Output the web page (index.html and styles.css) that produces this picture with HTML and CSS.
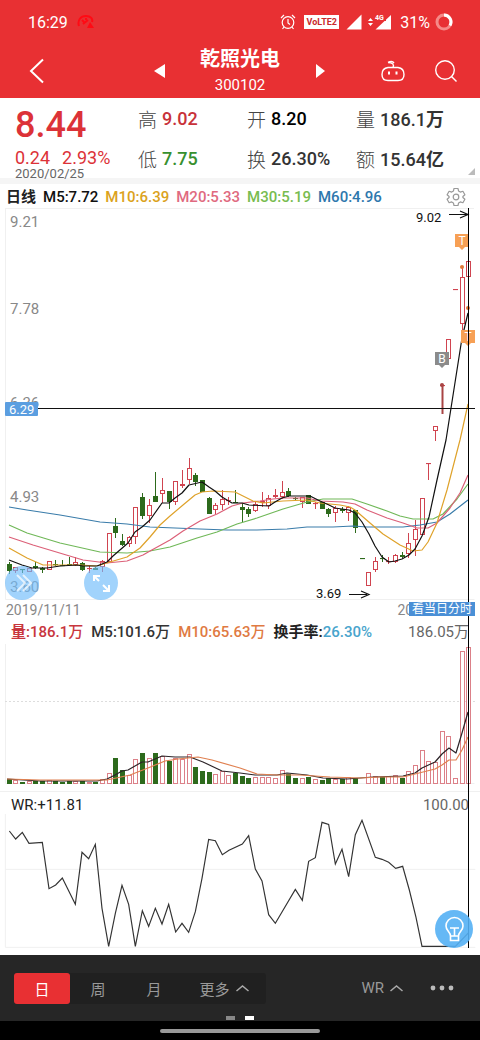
FILE: index.html
```html
<!DOCTYPE html>
<html lang="zh-CN">
<head>
<meta charset="utf-8">
<meta name="viewport" content="width=device-width, initial-scale=1">
<title>乾照光电 300102</title>
<link rel="stylesheet" href="styles.css">
</head>
<body>
<header class="header">
  <div class="status">
    <span class="clock">16:29</span>
    <svg class="status-app" width="18" height="14" viewBox="0 0 18 14" fill="none" stroke="#ff0a14" stroke-width="2"><path d="M2 11C0 5 4 1 9 1s7 3 6 6M5 5l2 2M9 3v2M6 9l5-4"/><path d="M13 7l4 6H10z" fill="#ff0a14" stroke="none"/></svg>
    <span class="spacer"></span>
    <svg width="16" height="16" viewBox="0 0 16 16" fill="none" stroke="#fff" stroke-width="1.2"><circle cx="8" cy="8.500" r="5.800"/><path d="M8 5v4l2 1.500M1 4l3-3M15 4l-3-3M4 13l-1.500 2M12 13l1.500 2"/></svg>
    <span class="volte">VoLTE2</span>
    <svg width="16" height="16" viewBox="0 0 16 16" fill="#fff"><path d="M15.500 .5v15H.5z"/></svg>
    <svg class="signal" width="25" height="16" viewBox="0 0 25 16"><path d="M24 1v14.500H8.500z" fill="#fff"/><path d="M3.500 4l2.500 3H1zM3.500 12l2.500-3H1z" fill="#fff"/><rect x="7" y="0" width="12" height="7" fill="#e83033"/><text class="net" x="8" y="6">4G</text></svg>
    <span class="battery">31%</span>
    <svg width="18" height="18" viewBox="0 0 18 18" fill="none" stroke-width="3"><circle cx="9" cy="9" r="7" stroke="#f58a88"/><path d="M9 2a7 7 0 0 1 6 10.500" stroke="#fff"/></svg>
  </div>
  <div class="titlebar">
    <button class="icon-btn back" aria-label="返回"><svg width="16" height="26" viewBox="0 0 16 26" fill="none" stroke="#fff" stroke-width="2"><path d="M14 1.500L2 13l12 11.500"/></svg></button>
    <div class="stock">
      <button class="icon-btn" aria-label="上一只"><svg width="11" height="14" viewBox="0 0 11 14" fill="#fff"><path d="M11 0v14L0 7z"/></svg></button>
      <div class="name"><h1>乾照光电</h1><span>300102</span></div>
      <button class="icon-btn" aria-label="下一只"><svg width="11" height="14" viewBox="0 0 11 14" fill="#fff"><path d="M1 0v14l9-7z"/></svg></button>
    </div>
    <div class="actions">
      <button class="icon-btn" aria-label="助手"><svg width="26" height="24" viewBox="0 0 26 24" fill="none" stroke="#fff" stroke-width="1.400"><path d="M8 8.500h10c4 .5 6 3.500 6 7 0 4-2 6-6 6H8c-4 0-6-2-6-6 0-3.500 2-6.500 6-7zM13 8.500c1.500-3-.5-5-5-5M8 3.500c3-1.500 5-1 6 .5"/><path d="M9 12.500v3M16.500 12.500v3" stroke-width="2"/></svg></button>
      <button class="icon-btn" aria-label="搜索"><svg width="24" height="24" viewBox="0 0 24 24" fill="none" stroke="#fff" stroke-width="1.400"><circle cx="11" cy="11" r="9.300"/><path d="M17.500 17.500l5 5"/></svg></button>
    </div>
  </div>
</header>

<section class="quote">
  <div class="price">
    <strong>8.44</strong>
    <p class="change"><span>0.24</span><span>2.93%</span></p>
    <time>2020/02/25</time>
  </div>
  <dl class="stats">
    <div><dt>高</dt><dd class="up">9.02</dd></div>
    <div><dt>开</dt><dd class="flat">8.20</dd></div>
    <div><dt>量</dt><dd>186.1<b>万</b></dd></div>
    <div><dt>低</dt><dd class="down">7.75</dd></div>
    <div><dt>换</dt><dd>26.30%</dd></div>
    <div><dt>额</dt><dd>15.64<b>亿</b></dd></div>
  </dl>
  <svg class="corner" width="7" height="7" viewBox="0 0 7 7"><path d="M7 0v7H0z" fill="#bbb"/></svg>
</section>

<main class="charts">
  <div class="legend ma-legend">
    <b class="period">日线</b><span class="m5">M5:7.72</span><span class="m10">M10:6.39</span><span class="m20">M20:5.33</span><span class="m30">M30:5.19</span><span class="m60">M60:4.96</span>
    <button class="icon-btn gear" aria-label="设置"><svg width="20" height="20" viewBox="0 0 20 20" fill="none" stroke="#999" stroke-width="1.200" stroke-linejoin="round"><path d="M8 1.500h4l.6 2.600 1.700 1 2.600-.8 2 3.400-2 1.800v1l2 1.800-2 3.400-2.600-.8-1.700 1-.6 2.600H8l-.6-2.600-1.700-1-2.600.8-2-3.400 2-1.800v-1l-2-1.800 2-3.400 2.600.8 1.700-1z"/><circle cx="10" cy="10" r="2.800"/></svg></button>
  </div>

  <div class="plot">
    <svg class="canvas" viewBox="0 208 480 392" role="img" aria-label="日K线图">
      <path class="frame" d="M5.500 208v391.500h469M5 208.500h469"/>
      <g class="axis"><text x="10" y="227">9.21</text><text x="10" y="314">7.78</text><text x="10" y="408">6.36</text><text x="10" y="502">4.93</text><text x="10" y="592">3.60</text></g>
      <g id="candles"></g>
      <polyline class="line m60" points="9,507 27,510 60,515 100,522 127,524 150,527 200,529 227,530 257,530 287,529 307,527 333,527 353,526 367,527 403,527 420,525 437,522 450,514 468,500"/>
      <polyline class="line m30" points="9,525 27,533 60,543 100,552 127,553 150,551 170,547 197,538 217,532 237,524 257,518 283,509 307,502 323,499 352,499 367,504 387,511 400,516 413,519 433,519 443,514 457,499 468,484"/>
      <polyline class="line m20" points="9,537 33,545 63,554 83,560 107,563 127,561 143,555 150,551 170,540 183,531 200,521 217,514 232,506 243,503 260,501 273,499 283,498 307,498 320,501 343,502 355,504 367,510 387,518 403,523 417,528 428,528 437,523 450,508 460,493 468,475"/>
      <polyline class="line m10" points="9,548 27,558 43,565 60,565 80,565 97,566 110,562 127,557 140,548 150,537 160,525 170,516 183,505 195,495 202,492 213,491 235,492 253,501 263,503 283,501 307,500 320,503 340,505 350,507 355,510 370,523 383,534 400,545 413,551 422,550 428,542 437,523 447,490 460,440 468,404"/>
      <polyline class="line m5" points="9,560 22,565 32,568 47,568 60,566 77,565 83,566 97,566 107,562 113,556 128,543 135,532 142,527 150,520 162,503 169,503 175,498 182,493 189,485 202,482 209,487 215,491 222,497 232,503 242,503 249,505 269,506 275,502 282,498 289,496 310,496 320,501 329,505 335,508 342,509 349,510 355,513 362,522 369,534 375,546 382,557 389,562 395,561 402,559 409,555 415,549 422,536 429,517 437,480 446,440 462,338 468,313"/>
      <path d="M455 234h14v13h-4l-3 3-3-3h-4zM461 330h14v13h-4l-3 3-3-3h-4z" fill="#f7a055"/>
      <path d="M435 352h14v13h-4l-3 3-3-3h-4z" fill="#8b8b8b"/>
      <g class="flag"><text x="462" y="245">T</text><text x="468" y="341">T</text><text x="442" y="363">B</text></g>
      <g fill="#e07838"><circle cx="462" cy="267" r="2"/><circle cx="468" cy="308" r="2"/></g>
      <path d="M442.500 385v29" stroke="#a94444" stroke-width="2"/><circle cx="442" cy="385" r="2" fill="#a94444"/>
      <path class="cross" d="M5 408.500h470"/>
      <rect x="5" y="402" width="33" height="14" rx="1" fill="#5b9ee0"/>
      <text class="tag" x="9" y="414">6.29</text>
      <g class="extreme"><text x="416" y="222">9.02</text><text x="316" y="598">3.69</text><path d="M449 214.500h18M460 211l8 3.500-8 3.500M349 594.500h18M361 591l8 3.500-8 3.500"/></g>
    </svg>
    <button class="bubble more" aria-label="展开"><svg width="34" height="34" viewBox="0 0 34 34" fill="none" stroke="#fff" stroke-width="2"><path d="M12 9l8 8-8 8M18 9l8 8-8 8" opacity=".7"/></svg></button>
    <button class="bubble full" aria-label="全屏"><svg width="34" height="34" viewBox="0 0 34 34" fill="none" stroke="#fff" stroke-width="2"><path d="M15 15l-5-5M10 15v-5h6M19 19l6 6M25 19v6h-6"/></svg></button>
  </div>

  <div class="dates"><time>2019/11/11</time><time>2020/02/25</time><button class="intraday">看当日分时</button></div>

  <div class="legend volume-legend">
    <span class="up"><b>量</b>:186.1万</span><span class="dark">M5:101.6万</span><span class="orange">M10:65.63万</span><span><b>换手率:</b><span class="blue">26.30%</span></span><span class="max">186.05万</span>
  </div>
  <svg class="canvas" viewBox="0 644 480 140" role="img" aria-label="成交量">
    <path class="frame" d="M5.500 644v139.500h469"/>
    <path class="dash" d="M5 701.500h470"/>
    <g id="volumes"></g>
    <polyline class="line vol5" points="7,779 40,781 67,781 97,781 107,779 115,775 122,771 128,770 135,766 142,762 148,762 162,756 175,757 190,757 203,762 222,771 240,773 255,775 277,775 287,773 307,775 323,778 347,779 373,777 403,776 415,773 422,768 435,762 442,754 449,748 456,753 462,733 468,712"/>
    <polyline class="line vol10" points="7,779 40,780 67,780 107,780 130,775 148,768 165,761 178,759 198,757 212,760 240,768 257,774 277,775 300,775 330,777 360,778 380,777 403,777 415,774 427,771 435,769 442,765 449,760 456,760 462,750 468,737"/>
  </svg>

  <div class="wr">
    <div class="wr-head"><span>WR:+11.81</span><span class="max">100.00</span></div>
    <svg class="canvas" viewBox="0 72 1440 402" role="img" aria-label="WR指标">
      <path class="frame wide" d="M16 72v400h1410M16 238h1410"/>
      <polyline class="wr-line" points="28,123 47,147 67,127 87,160 127,157 147,296 167,285 187,264 226,343 246,187 266,206 286,163 306,355 326,469 346,370 366,286 386,343 406,469 427,362 446,409 466,355 486,402 506,343 527,426 546,400 566,427 586,365 606,265 626,148 646,152 667,194 687,181 727,162 746,137 766,237 786,273 806,374 826,400 846,366 886,298 907,331 926,214 946,203 966,97 986,103 1006,222 1026,178 1046,260 1066,134 1086,91 1126,202 1146,208 1166,217 1187,235 1208,229 1228,300 1248,382 1266,469 1366,469 1405,429"/>
    </svg>
    <button class="bulb" aria-label="提示"><svg width="38" height="38" viewBox="0 0 38 38" fill="none" stroke="#fff" stroke-width="1.600"><path d="M15.500 26c0-4-4.500-5-4.500-10a8.500 8.500 0 0 1 17 0c0 5-4.500 6-4.500 10zM15.500 26v4.500h8V26M15 18h9M19.500 18v8"/></svg></button>
  </div>
  <i class="crosshair"></i>
</main>

<footer>
  <div class="toolbar">
    <div class="periods">
      <button class="active">日</button><button>周</button><button>月</button>
      <button class="wide-btn">更多<svg width="13" height="8" viewBox="0 0 13 8" fill="none" stroke="#aaa" stroke-width="1.500"><path d="M.5 7l6-5 6 5"/></svg></button>
    </div>
    <span class="spacer"></span>
    <button class="indicator">WR<svg width="13" height="8" viewBox="0 0 13 8" fill="none" stroke="#aaa" stroke-width="1.500"><path d="M.5 7l6-5 6 5"/></svg></button>
    <button class="icon-btn" aria-label="更多"><svg width="24" height="6" viewBox="0 0 24 6" fill="#bbb"><circle cx="3" cy="3" r="2.400"/><circle cx="12" cy="3" r="2.400"/><circle cx="21" cy="3" r="2.400"/></svg></button>
  </div>
  <div class="pages"><i></i><i class="on"></i></div>
  <div class="nav"><i></i></div>
</footer>
<script src="chart.js"></script>
</body>
</html>
```

FILE: styles.css
```css
* { box-sizing: border-box; }
body { margin: 0; background: #fff; color: #222; font-family: Roboto, "Noto Sans CJK SC", sans-serif; }
button { border: 0; padding: 0; background: none; color: inherit; font: inherit; }
svg { display: block; flex: none; }
h1, p, dl, dd { margin: 0; }
.spacer { flex: 1; }
.icon-btn { display: flex; align-items: center; justify-content: center; }

.header { background: #e83033; color: #fff; height: 98px; }
.status { display: flex; align-items: center; height: 44px; padding: 0 27px 0 28px; font-size: 16px; }
.status-app { margin-left: 9px; }
.volte { margin: 0 7px 0 8px; padding: 0 2px; background: #fff; color: #c9292c; font-size: 9px; line-height: 14px; font-weight: 700; width: 35px; text-align: center; }
.signal { margin-left: 5px; }
.net { font-size: 7px; font-weight: 700; fill: #fff; }
.battery { margin: 0 5px 0 8px; }
.titlebar { display: grid; grid-template-columns: 1fr auto 1fr; align-items: center; height: 54px; padding: 0 22px; }
.back { justify-self: start; margin-left: 7px; }
.stock { display: flex; align-items: center; gap: 35px; }
.name { text-align: center; }
.name h1 { font-size: 20px; line-height: 28px; font-weight: 700; }
.name span { display: block; font-size: 15px; line-height: 24px; }
.actions { display: flex; justify-content: flex-end; gap: 28px; }

.quote { position: relative; display: flex; height: 86px; border-bottom: 6px solid #f5f5f5; padding-left: 15px; }
.price { width: 123px; color: #dc3238; }
.price strong { display: block; font-size: 36px; line-height: 38px; font-weight: 500; padding-top: 8px; }
.change { display: flex; gap: 12px; font-size: 18px; line-height: 18px; padding-top: 5px; }
.price time { display: block; color: #666; font-size: 13px; line-height: 14px; }
.stats { flex: 1; display: grid; grid-template-columns: repeat(3, minmax(0, 109px)); grid-template-rows: 40px 40px; white-space: nowrap; }
.stats div { display: flex; align-items: center; gap: 5px; }
.stats dt { font-size: 19px; font-weight: 300; color: #444; }
.stats dd { font-size: 18px; font-weight: 500; color: #333; }
.stats .up { color: #c8323a; }
.stats .flat { color: #000; }
.stats .down { color: #37902f; }
.corner { position: absolute; right: 5px; bottom: 3px; }

.charts { position: relative; padding-bottom: 7px; }
.canvas { width: 100%; height: auto; }
.legend { display: flex; align-items: center; gap: 8px; height: 24px; padding: 0 14px 0 6px; font-size: 15px; line-height: 24px; font-weight: 500; white-space: nowrap; }
.ma-legend { gap: 7px; padding-top: 2px; }
.legend .m5 { color: #111; }
.legend .m10 { color: #dba21c; }
.legend .m20 { color: #e06a80; }
.legend .m30 { color: #78bc50; }
.legend .m60 { color: #2e78ad; }
.gear { margin-left: auto; }
.plot { position: relative; }
.frame { fill: none; stroke: #f0f0f0; }
.wide { stroke-width: 3; }
.axis { font-size: 15px; fill: #888; }
.line { fill: none; stroke-width: 1.2; stroke-linejoin: round; }
.line.m5 { stroke: #111; }
.line.m10 { stroke: #dfa22a; }
.line.m20 { stroke: #dc6078; }
.line.m30 { stroke: #70b858; }
.line.m60 { stroke: #3a7caa; }
.line.vol5 { stroke: #2c2428; }
.line.vol10 { stroke: #e08050; }
.rise { fill: #fff; stroke: #d04450; }
.fall { fill: #2d6a1c; stroke: #2d6a1c; }
.rise.bar { stroke: #dc8088; }
.flag { font-size: 12px; fill: #fff; text-anchor: middle; }
.cross { stroke: #111; }
.tag { font-size: 13px; fill: #fff; }
.extreme { font-size: 13px; fill: #111; }
.extreme path { fill: none; stroke: #111; stroke-width: 1.2; }
.dash { stroke: #ddd; stroke-dasharray: 2 2; }
.bubble { position: absolute; width: 34px; height: 34px; border-radius: 50%; background: rgba(110, 188, 250, .65); }
.more { left: 1%; bottom: 0; }
.full { left: 17.5%; bottom: 0; }
.dates { position: relative; display: flex; justify-content: space-between; height: 20px; padding: 0 8px 0 6px; font-size: 14px; line-height: 21px; color: #888; }
.intraday { position: absolute; z-index: 2; right: 5px; top: 2px; width: 66px; height: 14px; background: #4a8fd6; color: #fff; font-size: 12px; line-height: 14px; white-space: nowrap; }
.volume-legend { padding: 0 11px; }
.up { color: #c8363e; }
.dark { color: #333; }
.orange { color: #e07a42; }
.blue { color: #48a4cc; }
.max { margin-left: auto; color: #666; font-weight: 400; }
.wr { position: relative; margin-top: 7px; border-top: 1px solid #f0f0f0; }
.wr-head { display: flex; height: 22px; padding: 0 11px; font-size: 15px; line-height: 27px; }
.wr-line { fill: none; stroke: #333; stroke-width: 3.5; }
.bulb { position: absolute; right: 7px; bottom: 0; z-index: 2; width: 38px; height: 38px; border-radius: 50%; background: rgba(84, 176, 244, .9); }
.crosshair { position: absolute; left: 97.6%; top: 24px; bottom: 7px; width: 1px; background: #000; }

.toolbar { display: flex; align-items: center; height: 66px; padding: 0 26px 0 14px; background: #262626; color: #999; font-size: 15px; }
.periods { display: flex; height: 31px; border-radius: 3px; background: #202020; }
.periods button { width: 56px; border-radius: 3px; }
.periods .wide-btn { width: 84px; display: flex; align-items: center; justify-content: center; gap: 6px; }
.periods .active { background: #e83033; color: #fff; }
.indicator { display: flex; align-items: center; gap: 6px; margin-right: 27px; }
.pages { display: flex; justify-content: center; gap: 10px; height: 4px; margin-top: -5px; margin-bottom: 1px; }
.pages i { width: 9px; background: #888; }
.pages .on { background: #fff; }
.nav { display: flex; justify-content: center; height: 19px; padding-top: 8px; background: #000; }
.nav i { width: 160px; height: 4px; border-radius: 2px; background: #999; }
```

FILE: chart.js
```js
// One row per day: direction, high, low, body top, body bottom, volume top.
const days = `
g 562 574 564 571 779|r 567 573 567 571 780|g 569 573 569 570 782|r 568 572 568 572 781|g 562 569 566 568 781
g 567 573 568 570 781|r 561 570 561 570 780|g 560 566 564 565 781|g 560 566 565 566 782|g 557 565 564 565 781
r 557 566 562 565 781|g 562 571 563 570 781|r 566 573 568 569 782|g 567 570 568 570 782|r 560 572 561 567 779
r 533 562 533 562 773|g 518 538 526 533 758|g 534 546 541 545 770|r 536 547 537 544 775|r 507 544 507 537 759
g 493 519 497 516 753|r 499 523 505 516 758|g 472 502 496 502 753|r 478 503 490 494 756|g 491 509 491 502 761
r 481 505 481 502 758|r 470 488 484 486 759|r 458 484 468 480 754|g 473 486 475 482 767|g 480 492 480 492 771
g 497 514 498 514 772|r 503 514 505 510 774|r 490 510 499 505 771|r 497 505 500 501 775|g 490 503 502 503 773
g 503 522 507 510 776|g 507 517 509 514 778|r 502 512 504 511 777|r 492 507 501 503 777|r 495 509 498 506 777
r 489 498 495 497 778|r 481 499 492 497 770|g 488 497 491 496 774|g 497 501 498 499 778|r 497 508 497 502 778
g 495 504 495 504 777|r 502 509 503 504 779|g 502 509 502 509 780|g 508 517 509 514 778|r 506 522 508 513 779
g 507 513 509 511 779|r 506 521 507 513 777|g 510 533 510 528 778|g 558 559 558 559 783|r 572 586 572 586 773
r 557 572 561 570 776|g 555 562 558 559 777|r 557 564 561 562 776|r 554 563 555 562 775|g 552 558 555 557 778
r 533 558 543 554 771|r 520 556 529 540 765|r 498 535 498 535 750|r 463 480 463 463 761|r 426 441 426 431 762
r 385 414 385 386 731|r 339 359 339 359 736|r 289 290 289 290 778|r 267 342 277 324 651|r 261 277 261 277 647
`.trim().split(/[|\n]/).map(row => row.split(' '));

const first = 9.2, step = 6.66, base = 784;
let candles = '', volumes = '';
days.forEach(([dir, high, low, top, bottom, vol], i) => {
  const x = Math.floor(first + i * step) + 0.5;
  const kind = dir === 'g' ? 'fall' : 'rise';
  candles += `<path class="${kind}" d="M${x} ${high}V${low}"/>` +
    `<rect class="${kind}" x="${x - 2}" y="${+top + 0.5}" width="4" height="${Math.max(bottom - top - 1, 0.1)}"/>`;
  volumes += `<rect class="${kind} bar" x="${x - 2}" y="${+vol + 0.5}" width="4" height="${base - vol - 1}"/>`;
});
document.getElementById('candles').innerHTML = candles;
document.getElementById('volumes').innerHTML = volumes;
```
